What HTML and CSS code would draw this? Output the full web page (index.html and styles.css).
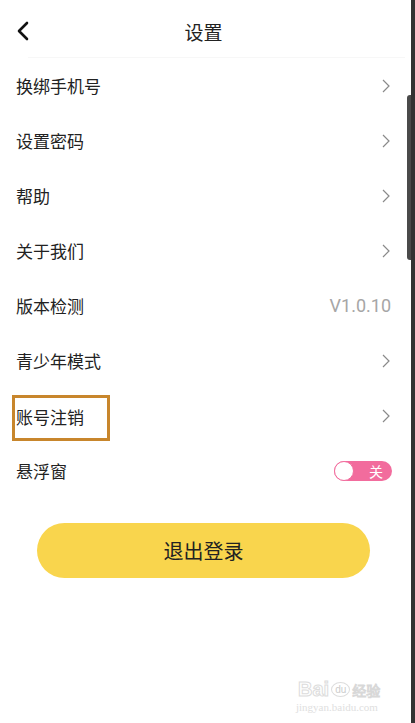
FILE: index.html
```html
<!DOCTYPE html>
<html lang="zh-CN">
<head>
<meta charset="utf-8">
<title>设置</title>
<link rel="stylesheet" href="styles.css">
</head>
<body>
<div class="screen">
  <main class="page">
    <header class="topbar">
      <span class="back">
        <svg width="14" height="20" viewBox="0 0 14 20"><path d="M11 2 L3 10 L11 18" fill="none" stroke="#111" stroke-width="2.6" stroke-linecap="round" stroke-linejoin="round"/></svg>
      </span>
      <h1 class="title">设置</h1>
      <span class="back-spacer"></span>
    </header>
    <div class="divider"></div>
    <ul class="list">
      <li class="row"><span class="label">换绑手机号</span><svg class="chev" width="8" height="14" viewBox="0 0 8 14"><path d="M1 1 L7 7 L1 13" fill="none" stroke="#8a8a8a" stroke-width="1.2"/></svg></li>
      <li class="row"><span class="label">设置密码</span><svg class="chev" width="8" height="14" viewBox="0 0 8 14"><path d="M1 1 L7 7 L1 13" fill="none" stroke="#8a8a8a" stroke-width="1.2"/></svg></li>
      <li class="row"><span class="label">帮助</span><svg class="chev" width="8" height="14" viewBox="0 0 8 14"><path d="M1 1 L7 7 L1 13" fill="none" stroke="#8a8a8a" stroke-width="1.2"/></svg></li>
      <li class="row"><span class="label">关于我们</span><svg class="chev" width="8" height="14" viewBox="0 0 8 14"><path d="M1 1 L7 7 L1 13" fill="none" stroke="#8a8a8a" stroke-width="1.2"/></svg></li>
      <li class="row"><span class="label">版本检测</span><span class="version">V1.0.10</span></li>
      <li class="row"><span class="label">青少年模式</span><svg class="chev" width="8" height="14" viewBox="0 0 8 14"><path d="M1 1 L7 7 L1 13" fill="none" stroke="#8a8a8a" stroke-width="1.2"/></svg></li>
      <li class="row"><span class="label highlight">账号注销</span><svg class="chev" width="8" height="14" viewBox="0 0 8 14"><path d="M1 1 L7 7 L1 13" fill="none" stroke="#8a8a8a" stroke-width="1.2"/></svg></li>
      <li class="row"><span class="label">悬浮窗</span>
        <span class="toggle"><span class="knob"></span><span class="toggle-text">关</span></span>
      </li>
    </ul>
    <div class="logout-wrap"><button class="logout">退出登录</button></div>
    <div class="watermark">
      <div class="wm-top"><span class="wm-bai">Bai</span><span class="wm-paw">du</span><span class="wm-jy">经验</span></div>
      <div class="wm-url">jingyan.baidu.com</div>
    </div>
  </main>
  <aside class="scrollbar"><span class="thumb"></span></aside>
</div>
</body>
</html>
```
FILE: styles.css
```css
* { box-sizing: border-box; }
html, body { margin: 0; padding: 0; }
body {
  width: 415px;
  height: 723px;
  overflow: hidden;
  background: #fff;
  font-family: "Noto Sans CJK SC", "Noto Sans", sans-serif;
  color: #222;
}
.screen {
  display: flex;
  height: 723px;
  position: relative;
}
.page {
  flex: 1;
  position: relative;
  background: #fff;
}
.scrollbar {
  width: 4px;
  background: #333;
  position: relative;
}
.thumb {
  position: absolute;
  right: 4px;
  top: 95px;
  width: 4px;
  height: 165px;
  background: #4a4a4a;
  border-radius: 3px 0 0 3px;
}
.topbar {
  height: 58px;
  display: flex;
  align-items: center;
  padding: 4px 0 0 16px;
}
.back { width: 20px; display: flex; align-items: center; }
.back-spacer { width: 36px; }
.title {
  flex: 1;
  margin: 0;
  text-align: center;
  font-size: 19px;
  font-weight: 400;
  color: #222;
  padding-right: 4px;
}
.divider {
  height: 1px;
  background: #f7f7f7;
  margin: -1px 6px 0 28px;
}
.list { list-style: none; margin: 0; padding: 0; }
.row {
  height: 55px;
  display: flex;
  align-items: center;
  justify-content: space-between;
  padding: 0 21px 0 16px;
  font-size: 17px;
}
.label { color: #222; line-height: 1; }
.label.highlight {
  outline: 3px solid #c8862c;
  outline-offset: 0;
  margin-left: -1px;
  padding: 10px 23px 13px 1px;
  margin-top: 4px;
}
.chev { display: block; }
.version {
  font-family: Roboto, "Noto Sans", sans-serif;
  font-size: 18px;
  color: #a6a6a6;
  margin-right: -1px;
}
.toggle {
  width: 58px;
  height: 20px;
  border-radius: 10px;
  background: #f26c9d;
  display: flex;
  align-items: center;
  justify-content: space-between;
  padding: 0 9px 0 0;
  margin-right: -2px;
}
.knob {
  flex: none;
  width: 20px;
  height: 20px;
  border-radius: 50%;
  background: #fff;
  border: 1.5px solid #f26c9d;
}
.toggle-text { color: #fff; font-size: 14px; line-height: 1; }
.logout-wrap {
  padding: 25px 41px 0 37px;
}
.logout {
  width: 100%;
  height: 55px;
  border: none;
  border-radius: 28px;
  background: #f9d54d;
  font-family: "Noto Sans CJK SC", sans-serif;
  font-size: 20px;
  color: #222;
}
.watermark {
  position: absolute;
  left: 298px;
  top: 678px;
  color: #e2e2e2;
}
.wm-top { display: flex; align-items: center; gap: 2px; }
.wm-bai { font-family: "Liberation Sans", sans-serif; font-size: 20px; font-weight: 700; color: #fff; -webkit-text-stroke: 1px #dcdcdc; }
.wm-paw { font-family: "Liberation Sans", sans-serif; font-size: 10px; border: 1px solid #ddd; border-radius: 50%; padding: 1px 3px; color: #ccc; }
.wm-jy { font-size: 14px; color: #fff; -webkit-text-stroke: 1px #d8d8d8; }
.wm-url { font-family: "Liberation Serif", serif; font-size: 11px; color: #e0e0e0; margin-top: 0; margin-left: -2px; }
```
